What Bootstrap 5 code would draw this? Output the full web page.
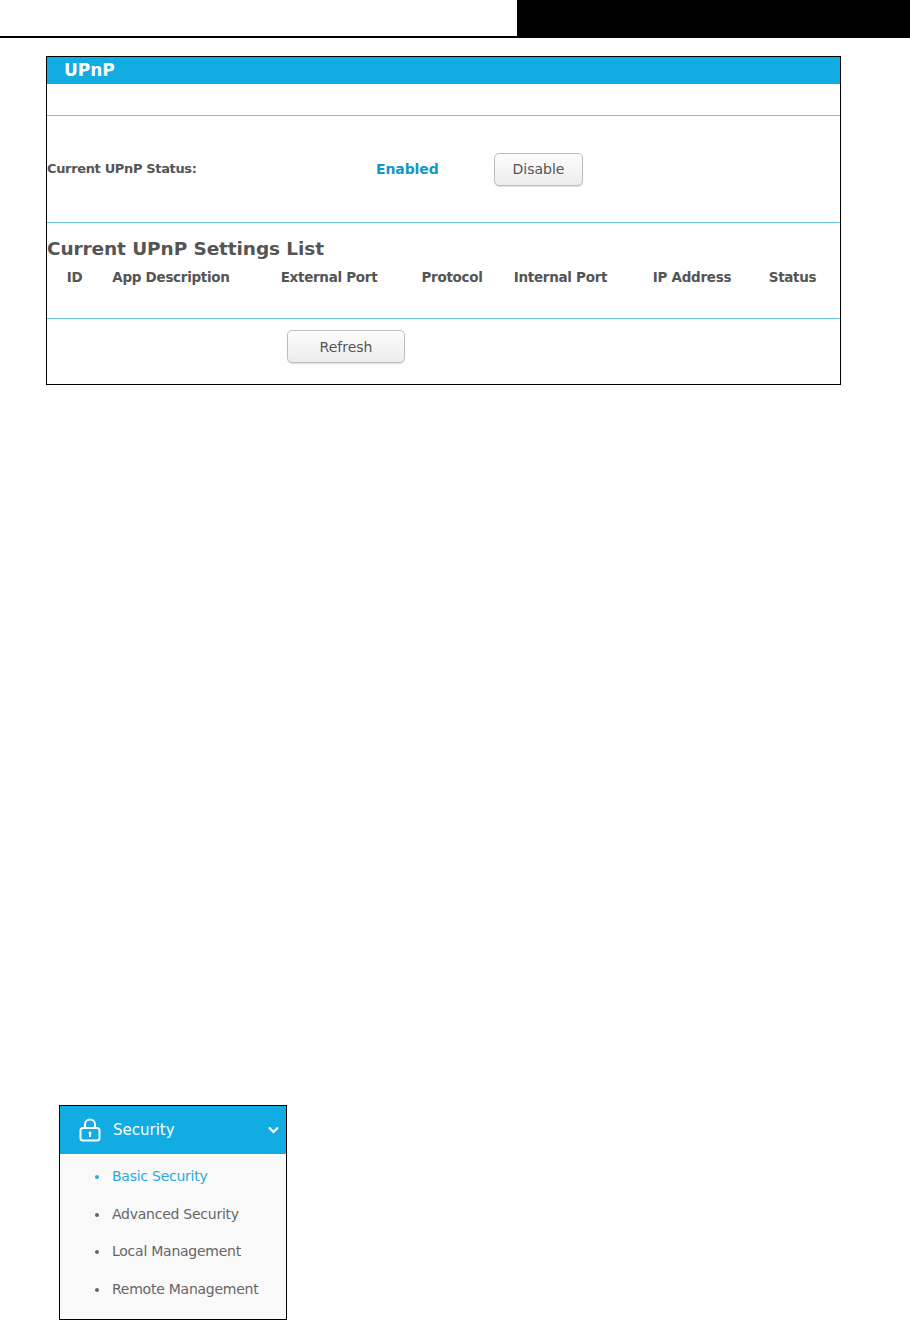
<!DOCTYPE html>
<html lang="en">
<head>
<meta charset="utf-8">
<title>UPnP</title>
<link href="https://cdn.jsdelivr.net/npm/bootstrap@5.3.0/dist/css/bootstrap.min.css" rel="stylesheet">
<style>
html,body{background:#fff;margin:0;padding:0}
body{font-family:"DejaVu Sans","Liberation Sans",sans-serif;color:#555;width:910px;height:1320px;overflow:hidden}
.topbar{height:38px;border-bottom:2px solid #000}
.topbar-black{width:393px;background:#000;height:37px}
.upnp-frame{width:795px;height:329px;margin:18px 0 0 46px;border:1px solid #000}
.upnp-title{height:27px;background:#10ace2;color:#fff;font-weight:700;font-size:17px;line-height:27px;padding-left:17px}
.upnp-gap{height:31px}
.sep{height:1px;background:#6dc8ee}
.status-row{height:106px;font-size:13.5px;font-weight:700}
.status-label{width:329px;font-size:13px;letter-spacing:-.35px}
.status-val{width:118px;color:#1397c7;font-size:14px;letter-spacing:-.1px}
.tp-btn{background:linear-gradient(#fdfdfd,#ececec);border:1px solid #bdbdbd;border-radius:5px;color:#555;font-family:inherit;font-size:14px;font-weight:400;padding:0;line-height:1;height:33px;box-shadow:0 1px 1px #ddd}
.btn-disable{width:89px}
.btn-refresh{width:118px}
.list-title{font-size:18.5px;font-weight:700;line-height:22px;padding-top:15px;letter-spacing:-.1px}
.ports{margin:0;width:789px;table-layout:fixed;border-collapse:collapse}
.ports th{padding:0;text-align:center;font-size:13.5px;font-weight:700;color:#555;line-height:16px;padding-top:9px;padding-bottom:33px;letter-spacing:-.3px;white-space:nowrap}
.refresh-row{padding:11px 0 0 240px}
.sec-menu{width:228px;height:215px;margin:720px 0 0 59px;border:1px solid #000;background:#f9f9f9}
.sec-head{height:48px;background:#10ace2;color:#fff;font-size:15px;padding-left:19px}
.sec-name{margin-left:12px;flex:1}
.sec-chev{margin-right:7px}
.sec-list{list-style:none;margin:0;padding:4px 0 0 35px;font-size:14px;color:#666}
.sec-list li{height:37.6px;line-height:37.6px;position:relative;padding-left:17px;letter-spacing:-.25px;white-space:nowrap}
.sec-list li::before{content:"";position:absolute;left:0;top:17px;width:4px;height:4px;border-radius:50%;background:#666}
.sec-list li.on{color:#2ba9e0}
.sec-list li.on::before{background:#2ba9e0}
</style>
</head>
<body>
<div class="topbar d-flex justify-content-end"><div class="topbar-black"></div></div>
<div class="upnp-frame">
  <div class="upnp-title">UPnP</div>
  <div class="upnp-gap"></div>
  <div class="sep"></div>
  <div class="status-row d-flex align-items-center">
    <div class="status-label">Current UPnP Status:</div>
    <div class="status-val">Enabled</div>
    <button type="button" class="tp-btn btn-disable">Disable</button>
  </div>
  <div class="sep"></div>
  <div class="list-title">Current UPnP Settings List</div>
  <table class="ports">
    <colgroup><col style="width:55px"><col style="width:138px"><col style="width:178px"><col style="width:68px"><col style="width:149px"><col style="width:114px"><col style="width:87px"></colgroup>
    <tr><th>ID</th><th>App Description</th><th>External Port</th><th>Protocol</th><th>Internal Port</th><th>IP Address</th><th>Status</th></tr>
  </table>
  <div class="sep"></div>
  <div class="refresh-row"><button type="button" class="tp-btn btn-refresh">Refresh</button></div>
</div>
<div class="sec-menu">
  <div class="sec-head d-flex align-items-center">
    <svg width="22" height="24" viewBox="0 0 22 24" fill="none" stroke="#fff" stroke-width="2"><path d="M6 10V6.5a5 5 0 0 1 10 0V10"/><rect x="1.5" y="10" width="19" height="12.5" rx="2.5"/><circle cx="11" cy="15" r="1.5" fill="#fff" stroke="none"/><path d="M11 15v4"/></svg>
    <span class="sec-name">Security</span>
    <svg class="sec-chev" width="11" height="8" viewBox="0 0 11 8" fill="none" stroke="#fff" stroke-width="2.2"><path d="M1 1.5l4.5 4.5 4.5-4.5"/></svg>
  </div>
  <ul class="sec-list">
    <li class="on">Basic Security</li>
    <li>Advanced Security</li>
    <li>Local Management</li>
    <li>Remote Management</li>
  </ul>
</div>
</body>
</html>
